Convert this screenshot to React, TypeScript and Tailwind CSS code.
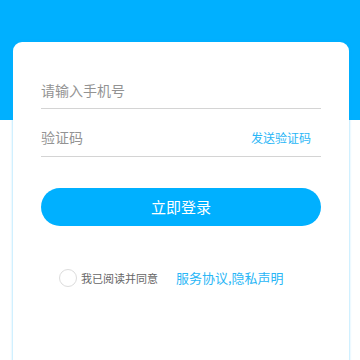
export default function App() {
  return (
    <div
      className="relative h-[360px] w-[360px] overflow-hidden bg-white"
      style={{ fontFamily: '"Noto Sans CJK SC", "Noto Sans", sans-serif' }}
    >
      <div className="h-[120px] bg-[#00b0ff]" />
      <div className="absolute left-[13px] top-[42px] h-[360px] w-[336px] rounded-[9px] bg-white shadow-[0_0_2px_1px_rgba(0,176,255,0.25)]">
        <div className="px-[28px] pt-[30px]">
          <div className="flex h-[37px] items-center border-b border-[#d4d4d4]">
            <span className="text-[14px] text-[#939393]">请输入手机号</span>
          </div>
          <div className="mt-[10px] flex h-[38px] items-center justify-between border-b border-[#d4d4d4]">
            <span className="text-[14px] text-[#939393]">验证码</span>
            <span className="pr-[10px] text-[12px] text-[#29b6f6]">发送验证码</span>
          </div>
          <button className="mt-[31px] flex h-[38px] w-full items-center justify-center rounded-full bg-[#00b0ff] text-[15px] text-white">
            立即登录
          </button>
          <div className="mt-[42px] flex items-center pl-[18px]">
            <span className="h-[18px] w-[18px] rounded-full border border-[#dcdcdc]" />
            <span className="ml-[4px] text-[11px] text-[#666]">我已阅读并同意</span>
            <span className="ml-[18px] text-[13px] text-[#29b6f6]">服务协议,隐私声明</span>
          </div>
        </div>
      </div>
    </div>
  );
}
